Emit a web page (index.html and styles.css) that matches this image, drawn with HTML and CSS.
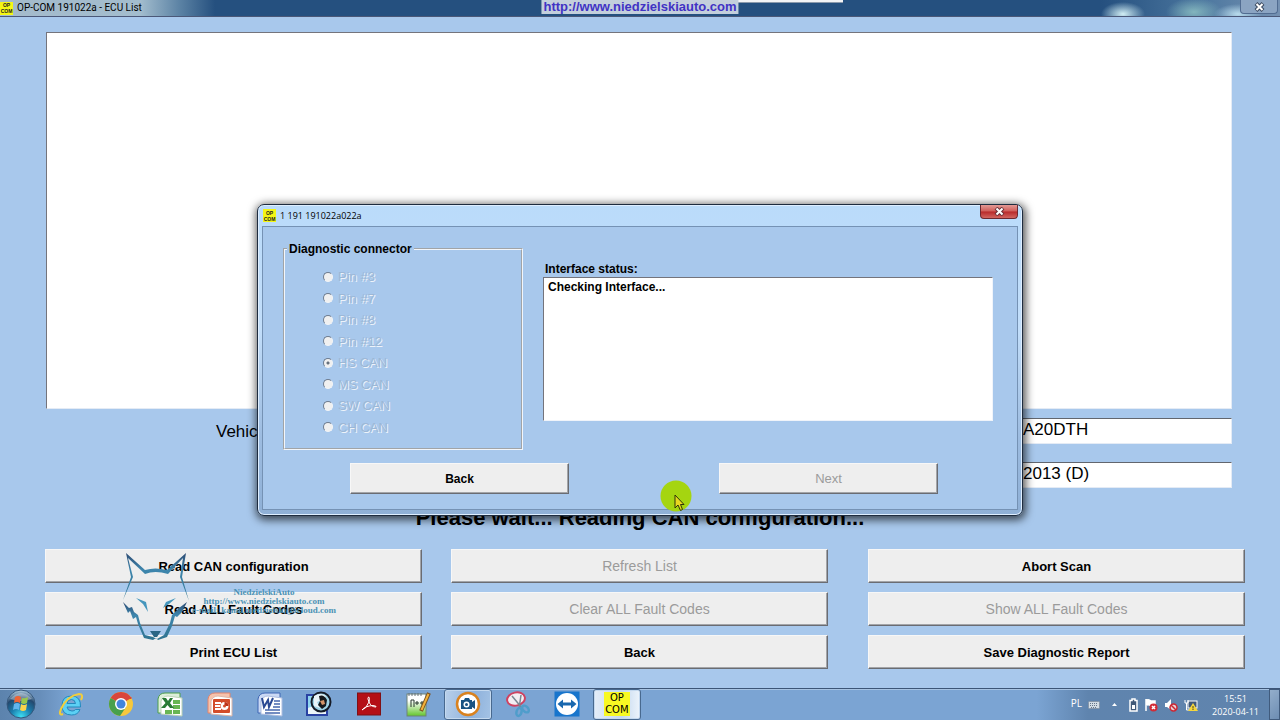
FILE: index.html
```html
<!DOCTYPE html>
<html lang="en">
<head>
<meta charset="utf-8">
<title>OP-COM 191022a - ECU List</title>
<link rel="stylesheet" href="styles.css">
</head>
<body>
<div class="desktop">
  <header class="titlebar">
    <span class="app-icon" aria-hidden="true"><span>OP</span><span>COM</span></span>
    <h1 class="titlebar-text">OP-COM 191022a - ECU List</h1>
    <span class="strip"></span>
    <a class="site-link" href="http://www.niedzielskiauto.com">http://www.niedzielskiauto.com</a>
    <button class="window-close" type="button" aria-label="Close"><svg width="11" height="10" viewBox="0 0 11 10"><path d="M2 1.500L9 8.500M9 1.500L2 8.500" stroke="#3b4a60" stroke-width="4"/><path d="M2.500 2L8.500 8M8.500 2L2.500 8" stroke="#fff" stroke-width="2"/></svg></button>
  </header>

  <main class="ecu">
    <div class="ecu-list"></div>
    <div class="vehicle">
      <label class="vehicle-label" for="engine">Vehicle</label>
      <div class="vehicle-fields">
        <input id="engine" class="vehicle-input" type="text" value="A20DTH" readonly>
        <input class="vehicle-input" type="text" value="2013 (D)" aria-label="Model year" readonly>
      </div>
    </div>
    <p class="message">Please wait... Reading CAN configuration...</p>
    <div class="actions">
      <button class="btn" type="button">Read CAN configuration</button>
      <button class="btn" type="button" disabled>Refresh List</button>
      <button class="btn" type="button">Abort Scan</button>
      <button class="btn" type="button">Read ALL Fault Codes</button>
      <button class="btn" type="button" disabled>Clear ALL Fault Codes</button>
      <button class="btn" type="button" disabled>Show ALL Fault Codes</button>
      <button class="btn" type="button">Print ECU List</button>
      <button class="btn" type="button">Back</button>
      <button class="btn" type="button">Save Diagnostic Report</button>
      <div class="watermark">
        <svg class="fox" width="72" height="92" viewBox="120 550 72 92" fill="none" stroke-linejoin="miter">
          <defs><linearGradient id="fur" x1="0" y1="0" x2="0" y2="1"><stop offset="0" stop-color="#2c4a72"/><stop offset=".35" stop-color="#3e86ad"/><stop offset="1" stop-color="#2f7390"/></linearGradient></defs>
          <path fill="url(#fur)" fill-rule="evenodd" d="M126 553L145 570Q155 567 167 570L186 553L182 577L189 601L180 577L183 558L168 574Q155 570 145 574L128 558L133 577L123 600L131 577Z"/>
          <path fill="url(#fur)" d="M123 602L129 608L132 607L134 612L138 615L140 623L145 635L153 637L157 639L164 635L170 623L172 615L175 612L179 608L187 602L182 612L177 617L175 616L172 626L167 637L158 640L156 638L153 640L144 638L138 624L136 617L133 619L130 611L128 613Z"/>
          <path fill="#2b6684" d="M150 631H161L157 637H154Z"/>
          <path fill="#4596bd" d="M136 598L146 602L148 612L143 604ZM176 598L166 602L163 608L169 604Z"/>
        </svg>
        <div class="watermark-text"><span>NiedzielskiAuto</span><span>http://www.niedzielskiauto.com</span><span>e-mail: kamil.niedzielski@icloud.com</span></div>
      </div>
    </div>
  </main>

  <section class="dialog" role="dialog" aria-labelledby="dialog-title">
    <header class="dialog-bar">
      <span class="app-icon" aria-hidden="true"><span>OP</span><span>COM</span></span>
      <h2 id="dialog-title" class="dialog-title">1 191 191022a022a</h2>
      <button class="dialog-close" type="button" aria-label="Close dialog"><svg width="11" height="9" viewBox="0 0 11 9"><path d="M2 1L9 8M9 1L2 8" stroke="#6b3038" stroke-width="4"/><path d="M2.500 1.500L8.500 7.500M8.500 1.500L2.500 7.500" stroke="#fff" stroke-width="2"/></svg></button>
    </header>
    <div class="dialog-body">
      <div class="dialog-main">
        <fieldset class="connector" disabled>
          <legend>Diagnostic connector</legend>
          <div class="pins">
            <label class="pin"><input type="radio" name="pin">Pin #3</label>
            <label class="pin"><input type="radio" name="pin">Pin #7</label>
            <label class="pin"><input type="radio" name="pin">Pin #8</label>
            <label class="pin"><input type="radio" name="pin">Pin #12</label>
            <label class="pin"><input type="radio" name="pin" checked>HS CAN</label>
            <label class="pin"><input type="radio" name="pin">MS CAN</label>
            <label class="pin"><input type="radio" name="pin">SW CAN</label>
            <label class="pin"><input type="radio" name="pin">CH CAN</label>
          </div>
        </fieldset>
        <div class="status">
          <label for="status">Interface status:</label>
          <textarea id="status" class="status-box" readonly>Checking Interface...</textarea>
        </div>
      </div>
      <div class="dialog-actions">
        <button class="btn" type="button">Back</button>
        <button class="btn" type="button" disabled>Next</button>
      </div>
    </div>
  </section>

  <svg class="pointer" width="32" height="32" viewBox="0 0 32 32" aria-hidden="true"><circle cx="16" cy="16" r="15.500" fill="#a5d510"/><path d="M15 15V28L18 25L20.500 30.500L22.500 29.500L20.500 24.500H24Z" fill="#e8d820" stroke="#2e3508"/></svg>

  <footer class="taskbar">
    <button class="start" type="button" aria-label="Start">
      <svg width="30" height="30" viewBox="0 0 30 30"><defs><radialGradient id="orb" cx=".5" cy=".95" r=".9"><stop offset="0" stop-color="#3ee0f4"/><stop offset=".4" stop-color="#1b7eae"/><stop offset=".75" stop-color="#24486e"/><stop offset="1" stop-color="#9dbad0"/></radialGradient></defs><circle cx="15" cy="15" r="14" fill="url(#orb)" stroke="#36587c"/><path d="M4 10Q15-2 26 10Q15 14 4 10" fill="#fff" opacity=".35"/><path d="M9 8Q12 6 15 8L14 14Q11 12 8 14Z" fill="#ee6436"/><path d="M16 9Q19 10 22 8L21 14Q18 16 15 14Z" fill="#9ac94b"/><path d="M8 15Q11 13 14 15L13 21Q10 19 7 21Z" fill="#62b5ee"/><path d="M15 15Q18 17 21 15L20 21Q17 23 14 21Z" fill="#fbd34b"/></svg>
    </button>
    <nav class="tasks" aria-label="Programs">
      <button class="task" type="button" aria-label="Internet Explorer"><svg width="28" height="28" viewBox="0 0 28 28"><path d="M23.500 17H10Q10.500 21 15 21Q17.500 21 18.500 19.500H23Q21 25 14.500 25Q5 25 5 15.500Q5 6 14.500 6Q24 6 23.500 17ZM10 13.500H18.500Q18 9.500 14.500 9.500Q10.500 9.500 10 13.500Z" fill="#5cd0f4" stroke="#2389bd"/><path d="M6 24Q1 26 4 19Q10 6 22 4Q27 4 24 10" fill="none" stroke="#f1cd3c" stroke-width="2"/></svg></button>
      <button class="task" type="button" aria-label="Chrome"><svg width="26" height="26" viewBox="0 0 26 26"><circle cx="13" cy="13" r="12" fill="#f6c83c"/><path d="M13 13L2.600 7A12 12 0 0 1 23.400 7Z" fill="#d9453b"/><path d="M13 13L2.600 7A12 12 0 0 0 12 25L18 16Z" fill="#47a04c"/><path d="M13 7H23.400" stroke="#d9453b" stroke-width="2"/><circle cx="13" cy="13" r="6" fill="#fff"/><circle cx="13" cy="13" r="4.500" fill="#4285dc"/></svg></button>
      <button class="task" type="button" aria-label="Excel"><svg width="28" height="26" viewBox="0 0 28 26"><path d="M2 22V8Q3 2 9 2H24V22Z" fill="#dcefd9" stroke="#4f9e4c"/><path d="M5 22V10Q7 5 12 5L26 7V25L5 23Z" fill="#fff" stroke="#bcd3b6"/><path d="M17 9H24V13H17ZM17 14H24V18H17ZM9 19H16V23H9ZM17 19H24V23H17Z" fill="#68b653"/><path d="M6 7H10L12 10L14 7H17L14 12L18 17H14L11.500 14L9 17H5L9.500 12Z" fill="#287a35"/></svg></button>
      <button class="task" type="button" aria-label="PowerPoint"><svg width="28" height="26" viewBox="0 0 28 26"><path d="M2 22V8Q3 2 9 2H24V22Z" fill="#f6c3ad" stroke="#e4846b"/><path d="M5 22V10Q7 5 12 5L26 7V25L5 23Z" fill="#fff" stroke="#ddb6a8"/><rect x="7" y="8" width="17" height="14" rx="1" fill="#d34c2a"/><path d="M9 12H15M9 15H14M9 18H15" stroke="#fff" stroke-width="2"/><circle cx="18.500" cy="15" r="4" fill="#fff"/><path d="M18.500 15V11A4 4 0 0 1 22.500 15Z" fill="#b93219"/><circle cx="18.500" cy="15" r="1.500" fill="#d34c2a"/></svg></button>
      <button class="task" type="button" aria-label="Word"><svg width="28" height="26" viewBox="0 0 28 26"><path d="M2 22V8Q3 2 9 2H24V22Z" fill="#cbd9f4" stroke="#3f66b3"/><path d="M5 22V10Q7 5 12 5L26 7V25L5 23Z" fill="#fff" stroke="#adbde0"/><path d="M18 10H24M18 13H24M17 16H24M9 19H24M9 22H24" stroke="#4667ad" stroke-width="1.500"/><path d="M6 7L8 16L12 9L13 16L17 7" fill="none" stroke="#2a4993" stroke-width="2"/></svg></button>
      <button class="task" type="button" aria-label="Capture tool"><svg width="28" height="28" viewBox="0 0 28 28"><rect x="2" y="5" width="20" height="20" fill="#8ed4ee" stroke="#2942a3" stroke-width="2"/><path d="M3 18Q10 14 21 19V24H3Z" fill="#ecf5f9"/><circle cx="16" cy="12" r="9.500" fill="#9fd3e6" stroke="#151b27" stroke-width="2"/><path d="M9 6Q15 2 21 6L17 10L12 12L15 18L9 16Z" fill="#e9f4f8"/><path d="M14 6Q19 4 22 10L21 16L17 19L13 15L15 11Z" fill="#15181c"/><path d="M15 11L19 10L20 14L17 15Z" fill="#d49469"/></svg></button>
      <button class="task" type="button" aria-label="Acrobat Reader"><svg width="24" height="24" viewBox="0 0 24 24"><rect x=".5" y="1" width="23" height="22" fill="#b40f16" stroke="#7f1015"/><path d="M5 18Q9 17 12 10Q13 5 11.500 5Q10 6 12 10Q14 15 19 15Q20 14 16 13.500Q8 14 5 18Z" fill="none" stroke="#fff"/></svg></button>
      <button class="task" type="button" aria-label="Notepad++"><svg width="26" height="28" viewBox="0 0 26 28"><defs><linearGradient id="note" x1="0" y1="0" x2="0" y2="1"><stop offset=".3" stop-color="#fff"/><stop offset="1" stop-color="#62c52c"/></linearGradient></defs><rect x="2" y="4" width="19" height="22" fill="url(#note)" stroke="#6f8278"/><path d="M4 3V6M7 3V6M10 3V6M13 3V6M16 3V6" stroke="#67727b"/><path d="M6 17V10H9V17M10 13H14M12 11V15M15 13H19M17 11V15" fill="none" stroke="#27372c"/><path d="M24 3L16 21" stroke="#7b5220" stroke-width="4"/><path d="M23.500 4L16.500 20" stroke="#f3b23c" stroke-width="2"/></svg></button>
      <button class="task task-open" type="button" aria-label="Screen recorder"><svg width="26" height="26" viewBox="0 0 26 26"><circle cx="13" cy="13" r="11" fill="#fff" stroke="#d9821f" stroke-width="2.500"/><path d="M6 9H9L10 7H14L15 9H17V11L20 9V18L17 16V18H6Z" fill="#195382"/><circle cx="11.500" cy="13.500" r="3" fill="#fff"/><circle cx="11.500" cy="13.500" r="1.500" fill="#195382"/></svg></button>
      <button class="task" type="button" aria-label="Snipping tool"><svg width="28" height="28" viewBox="0 0 28 28"><ellipse cx="12" cy="9" rx="9" ry="6.500" fill="#f3eef3" stroke="#cf4261" stroke-width="2" transform="rotate(-12 12 9)"/><path d="M8 6L18 18M17 5L15 19" stroke="#7b8792" stroke-width="1.500"/><g fill="none" stroke="#4f9dcb" stroke-width="2.500"><ellipse cx="15" cy="22" rx="2.500" ry="4" transform="rotate(15 15 22)"/><ellipse cx="21.500" cy="19" rx="2.500" ry="4" transform="rotate(-45 21.500 19)"/></g></svg></button>
      <button class="task" type="button" aria-label="TeamViewer"><svg width="26" height="26" viewBox="0 0 26 26"><rect x=".5" y=".5" width="25" height="25" fill="#1875cc"/><circle cx="13" cy="13" r="11" fill="#fff"/><path d="M3.500 13L9 8.500V11.500H17V8.500L22.500 13L17 17.500V14.500H9V17.500Z" fill="#1867ae"/></svg></button>
      <button class="task task-open task-front" type="button"><span class="task-logo"><span>OP</span><span>COM</span></span></button>
    </nav>
    <div class="tray">
      <span class="tray-lang">PL</span>
      <svg width="12" height="8" viewBox="0 0 12 8"><rect x=".5" y=".5" width="11" height="7" rx="1" fill="#d3dce4" stroke="#8796a8"/><path d="M2 2.500H10M2 4.500H10M3 6.500H9" stroke="#66778b" stroke-dasharray="1 1"/></svg>
      <svg class="tray-more" width="7" height="5" viewBox="0 0 7 5"><path d="M1 4L3.500 1L6 4Z" fill="#fff"/></svg>
      <svg width="9" height="14" viewBox="0 0 9 14"><path d="M3 1H6V2.500H8V13H1V2.500H3Z" fill="#405978" stroke="#fff" stroke-width="1.500"/><rect x="3" y="7" width="3" height="4" fill="#fff"/></svg>
      <svg width="14" height="14" viewBox="0 0 14 14"><path d="M2 1V13M2.500 2Q5 1 7 3H11V8H7Q5 6 2.500 7Z" fill="#fff" stroke="#fff" stroke-width="1.500"/><circle cx="9.500" cy="9.500" r="4" fill="#d22c36"/><path d="M8 8L11 11M11 8L8 11" stroke="#fff" stroke-width="1.500"/></svg>
      <svg width="14" height="14" viewBox="0 0 14 14"><path d="M1 5H3L7 1V12L3 9H1Z" fill="#fff"/><circle cx="9.500" cy="9.500" r="3.500" fill="#e9cfd2" stroke="#cc2733" stroke-width="1.500"/><path d="M7 7L12 12" stroke="#cc2733" stroke-width="1.500"/></svg>
      <svg width="14" height="14" viewBox="0 0 14 14"><rect x="4" y="3" width="9" height="7" fill="#40597b" stroke="#fff"/><path d="M1 2V5H4V2M2.500 5V12H6" fill="none" stroke="#fff"/><path d="M9 5L14 13H4Z" fill="#f5d63c"/><path d="M9 8V10.500M9 11V12" stroke="#49421a"/></svg>
      <div class="clock"><time>15:51</time><time>2020-04-11</time></div>
      <button class="show-desktop" type="button" aria-label="Show desktop"></button>
    </div>
  </footer>
</div>
</body>
</html>
```
FILE: styles.css
```css
* { box-sizing: border-box; }

body {
  margin: 0;
  font-family: "Liberation Sans", Arial, sans-serif;
  font-size: 13px;
  color: #000;
  background: #a8c8ec;
}

h1, h2, p { margin: 0; font-weight: normal; }
button, input, textarea { font: inherit; color: inherit; }

.desktop {
  position: relative;
  display: flex;
  flex-direction: column;
  min-height: 100vh;
}

/* Main window title bar */
.titlebar {
  position: relative;
  display: flex;
  align-items: center;
  gap: 4px;
  height: 17px;
  border-bottom: 1px solid #4b5878;
  background:
    radial-gradient(ellipse 22px 12px at 1123px 14px, #d2eff5, transparent),
    radial-gradient(ellipse 28px 14px at 1194px 12px, #83b5bd, transparent),
    radial-gradient(ellipse 24px 10px at 1238px 14px, #b9dced, transparent),
    linear-gradient(90deg, #a4bacb 0, #a3bdce 140px, #5b82a4 180px, #25507f 215px, #25507f 86%, #4c779f 94%, #7591b2);
}

.titlebar-text { font: 10px/16px Roboto, "Noto Sans", sans-serif; }

.app-icon {
  display: flex;
  flex-direction: column;
  justify-content: center;
  width: 13px;
  height: 13px;
  background: #f4f615;
  color: #222;
  font: bold 5px/6px "Liberation Sans", sans-serif;
  text-align: center;
}

.strip {
  position: absolute;
  top: 0;
  left: 50%;
  width: 203px;
  height: 3px;
  background: #f4f4f6;
  border-bottom: 1px solid #8c9aac;
}

.site-link {
  position: absolute;
  top: 0;
  left: 50%;
  transform: translateX(-50%);
  padding: 0 2px;
  background: #c3cfdc;
  color: #4133c4;
  font: bold 13px/14px "Liberation Sans", sans-serif;
  text-decoration: none;
}

.window-close {
  display: flex;
  align-items: center;
  justify-content: center;
  align-self: flex-start;
  width: 38px;
  height: 14px;
  margin: 0 2px 0 auto;
  padding: 0;
  border: 1px solid #516c91;
  border-top: 0;
  border-radius: 0 0 4px 4px;
  background: #8ba4c2;
}

/* ECU window */
.ecu {
  flex: 1;
  display: flex;
  flex-direction: column;
  padding: 15px 0 19px;
}

.ecu-list {
  flex: 1;
  margin: 0 48px 9px 46px;
  border: 1px solid #e4ebf5;
  border-top-color: #74747c;
  border-left-color: #74747c;
  background: #fff;
}

.vehicle {
  display: flex;
  justify-content: space-between;
  padding: 0 48px 0 216px;
  font-size: 17px;
}

.vehicle-label { line-height: 28px; }

.vehicle-fields {
  display: flex;
  flex-direction: column;
  gap: 18px;
  width: 212px;
}

.vehicle-input {
  width: 100%;
  height: 26px;
  padding: 0 2px 2px;
  border: 1px solid #e4ebf5;
  border-top-color: #62666e;
  border-left-color: #62666e;
  background: #fff;
}

.message {
  margin: 17px 0 18px;
  font-size: 22px;
  font-weight: bold;
  line-height: 26px;
  text-align: center;
}

.actions {
  position: relative;
  display: grid;
  grid-template-columns: 1fr 29px 1fr 40px 1fr;
  grid-auto-rows: 34px;
  row-gap: 9px;
  padding: 0 35px 0 45px;
}

.actions .btn:nth-of-type(3n + 1) { grid-column: 1; }
.actions .btn:nth-of-type(3n + 2) { grid-column: 3; }
.actions .btn:nth-of-type(3n) { grid-column: 5; }

.btn {
  padding: 0;
  border: 1px solid #f7f7f7;
  border-right-color: #6a6c72;
  border-bottom-color: #6a6c72;
  border-radius: 0;
  background: #eee;
  box-shadow: inset -1px -1px 0 #a3a5a9;
  font-weight: bold;
}

.btn:disabled {
  color: #9b9b9b;
  font-size: 14px;
  font-weight: normal;
}

.watermark {
  position: absolute;
  top: 1px;
  left: 120px;
  display: flex;
  align-items: center;
  pointer-events: none;
}

.watermark-text {
  display: flex;
  flex-direction: column;
  align-items: center;
  padding-top: 10px;
  color: #4b92b5;
  font: bold 9px/9px "Liberation Serif", serif;
}

/* Interface dialog */
.dialog {
  position: absolute;
  top: 204px;
  left: 50%;
  transform: translateX(-50%);
  width: 766px;
  padding: 0 4px 5px;
  border: 1px solid #1e2c3f;
  border-radius: 7px;
  background: linear-gradient(#badbfa 0, #c2defa 40%, #9dbce0 75%, #8fb0d6);
  box-shadow: inset 0 0 0 1px #deeeff, 1px 2px 9px 2px rgba(0, 0, 0, .65);
}

.dialog-bar {
  display: flex;
  align-items: center;
  gap: 4px;
  height: 21px;
  padding-left: 1px;
  font-family: "Open Sans", "Noto Sans", sans-serif;
}

.dialog-title { font-size: 9px; }

.dialog-close {
  display: flex;
  align-items: center;
  justify-content: center;
  align-self: flex-start;
  width: 38px;
  height: 14px;
  margin-left: auto;
  padding: 0;
  border: 1px solid #6d2830;
  border-top: 0;
  border-radius: 0 0 4px 4px;
  background: linear-gradient(#e39a96 0, #cf5c58 48%, #b8282a 52%, #d16560);
}

.dialog-body {
  padding: 15px 24px 15px 20px;
  border: 1px solid #7592b4;
  background: #a8c8ec;
}

.dialog-main {
  display: flex;
  gap: 20px;
  font-size: 12px;
}

.connector {
  flex: 0 0 240px;
  margin: 0;
  padding: 10px 4px 10px 38px;
  border: 2px groove #f2f6fb;
}

.connector legend {
  margin-left: -36px;
  padding: 0 2px;
  font-weight: bold;
  line-height: 14px;
}

.pins {
  display: grid;
  grid-auto-rows: 1fr;
  height: 172px;
}

.pin {
  display: flex;
  align-items: center;
  gap: 5px;
  color: #9cb7d6;
  font-size: 13px;
  text-shadow: 1px 1px 0 #edf3fa;
}

.pin input {
  appearance: none;
  width: 10px;
  height: 10px;
  margin: 0;
  border: 1px solid #f2f4f7;
  border-top-color: #6d7c8f;
  border-left-color: #6d7c8f;
  border-radius: 50%;
  background: #f0f0f0;
}

.pin input:checked { background: radial-gradient(circle, #66707c 0 1px, #f0f0f0 2px); }

.status {
  flex: 1;
  display: flex;
  flex-direction: column;
  padding-top: 19px;
  font-weight: bold;
}

.status label { padding-left: 2px; line-height: 16px; }

.status-box {
  height: 144px;
  padding: 2px 4px;
  border: 1px solid #f0f4fa;
  border-top-color: #74747c;
  border-left-color: #74747c;
  border-radius: 0;
  background: #fff;
  resize: none;
}

.dialog-actions {
  display: flex;
  justify-content: space-between;
  padding: 13px 55px 0 67px;
}

.dialog-actions .btn { width: 219px; height: 31px; font-size: 12px; }
.dialog-actions .btn:disabled { font-size: 13px; }

.pointer { position: absolute; top: 480px; left: 660px; }

/* Taskbar */
.taskbar {
  display: flex;
  height: 32px;
  border-top: 1px solid #3c5577;
  box-shadow: inset 0 1px 0 #a8c4e3;
  background: linear-gradient(90deg, #5c83ad 0, #678eba 40px, #7ba4d3 70px, #7ba4d3 81%, #5f84ae 85%, #6084ad);
}

.start {
  width: 47px;
  padding: 0 0 0 6px;
  border: 0;
  background: none;
  text-align: left;
}

.tasks {
  flex: 0 0 594px;
  display: flex;
  justify-content: space-between;
}

.task {
  display: flex;
  align-items: center;
  justify-content: center;
  width: 48px;
  padding: 0 0 2px;
  border: 1px solid transparent;
  background: none;
}

.task-open {
  border-color: #48698f;
  border-radius: 3px;
  background: linear-gradient(100deg, #b9d0ea, #8fb2dc 60%, #a4c3e5);
  box-shadow: inset 0 0 0 1px #c4d9ef;
}

.task-front { background: linear-gradient(90deg, #e5eef8, #c2d7ef 60%, #edf4fb); }

.task-logo {
  display: flex;
  flex-direction: column;
  align-items: center;
  width: 26px;
  background: #f8f923;
  font: 10px/12px "DejaVu Sans", sans-serif;
}

.tray {
  display: flex;
  align-items: center;
  gap: 6px;
  margin-left: auto;
  color: #fff;
  font-family: "Open Sans", "Noto Sans", sans-serif;
  font-size: 9px;
}

.tray-lang { font-size: 10px; line-height: 12px; padding-bottom: 3px; }
.tray-more { margin: 0 5px; }

.clock {
  display: flex;
  flex-direction: column;
  align-items: center;
  margin: 0 4px 0 8px;
  line-height: 13px;
}

.show-desktop {
  align-self: stretch;
  width: 11px;
  padding: 0;
  border: 1px solid #405b7d;
  background: linear-gradient(135deg, #93aecb, #6d8db3);
}
```
